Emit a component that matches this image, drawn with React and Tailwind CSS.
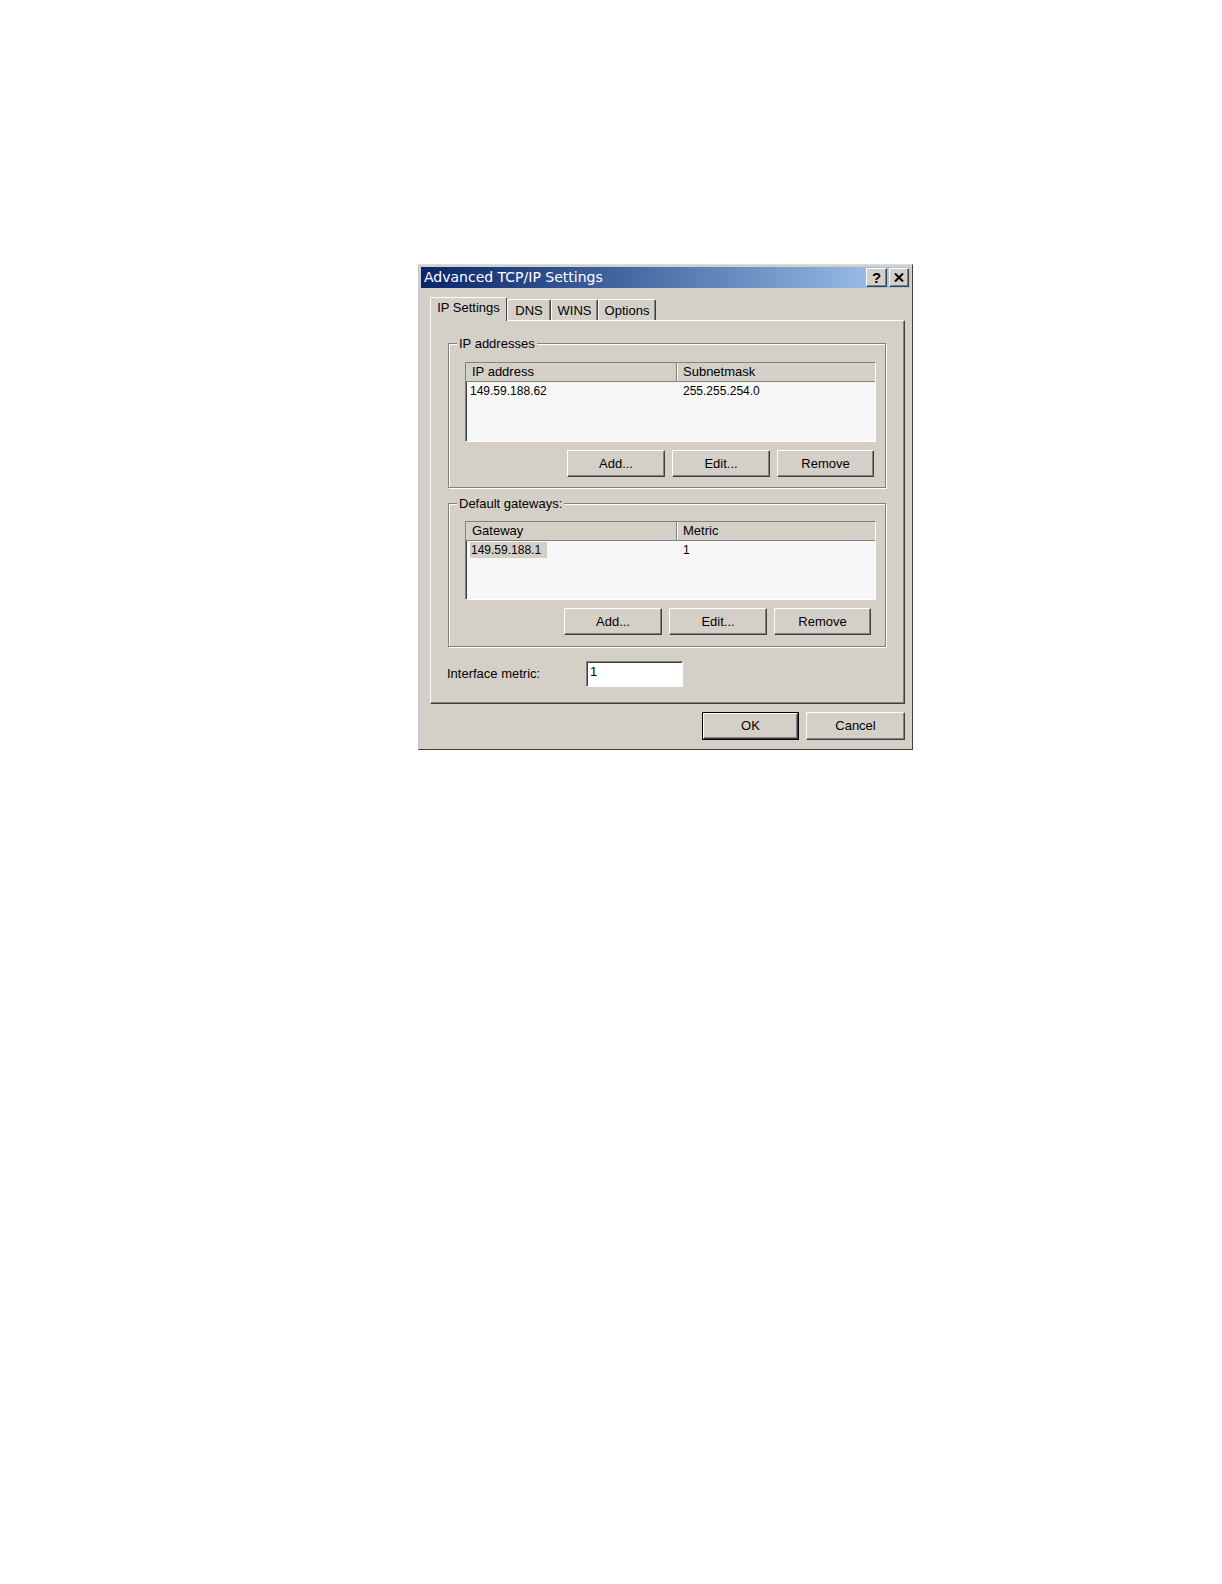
const raised =
  'border border-t-white border-l-white border-r-[#404040] border-b-[#404040] shadow-[inset_-1px_-1px_0_#808080]'
const sunken =
  'border border-t-[#808080] border-l-[#808080] border-r-white border-b-white shadow-[inset_1px_1px_0_#404040]'

function Button({ children, className = '', isDefault = false }) {
  if (isDefault) {
    return (
      <div className={`border border-black ${className}`}>
        <div className={`${raised} w-full h-full flex items-center justify-center text-[13px] text-black`}>
          {children}
        </div>
      </div>
    )
  }
  return (
    <div className={`${raised} flex items-center justify-center text-[13px] text-black ${className}`}>
      {children}
    </div>
  )
}

function Tab({ label, active, width }) {
  if (active) {
    return (
      <div
        className={`${width} h-[24px] -mb-[1px] relative z-10 bg-[#d4d0c8] border-t border-l border-t-white border-l-white border-r border-r-[#404040] rounded-t-[2px] flex items-center justify-center text-[13px] pb-[3px]`}
      >
        {label}
      </div>
    )
  }
  return (
    <div
      className={`${width} h-[21px] border-t border-l border-t-white border-l-white border-r border-r-[#404040] shadow-[inset_-1px_0_0_#808080] rounded-t-[2px] flex items-center justify-center text-[13px] pt-[1px]`}
    >
      {label}
    </div>
  )
}

function ListView({ cols, row, height, highlight }) {
  return (
    <div className={`${sunken} w-[411px] ${height} bg-[#f7f7f7] flex flex-col`}>
      <div className="h-[19px] flex bg-[#d4d0c8] border-b border-b-[#808080] text-[13px] leading-[18px]">
        <div className="w-[211px] pl-[6px] border-r border-r-[#808080] shadow-[1px_0_0_white]">{cols[0]}</div>
        <div className="flex-1 pl-[6px]">{cols[1]}</div>
      </div>
      <div className="flex text-[12px] leading-[16px] mt-[1px]">
        <div className="w-[211px] pl-[4px]">
          <span className={highlight ? 'bg-[#d4d0c8] pl-[1px] pr-[6px] py-[1px]' : ''}>{row[0]}</span>
        </div>
        <div className="flex-1 pl-[6px]">{row[1]}</div>
      </div>
    </div>
  )
}

function Group({ label, height, listHeight, listTop, cols, row, highlight, btnPad }) {
  return (
    <div className={`w-[438px] ${height} border border-[#808080] shadow-[1px_1px_0_white,inset_1px_1px_0_white] flex flex-col`}>
      <div className="-mt-[8px] ml-[8px] px-[2px] w-fit bg-[#d4d0c8] text-[13px] leading-[15px]">{label}</div>
      <div className={`ml-[16px] ${listTop}`}>
        <ListView cols={cols} row={row} height={listHeight} highlight={highlight} />
      </div>
      <div className={`flex justify-end gap-[7px] mt-[8px] ${btnPad}`}>
        <Button className="w-[98px] h-[27px]">Add...</Button>
        <Button className="w-[98px] h-[27px]">Edit...</Button>
        <Button className="w-[97px] h-[27px]">Remove</Button>
      </div>
    </div>
  )
}

export default function App() {
  return (
    <div className="w-[1222px] h-[1584px] overflow-hidden bg-white pt-[264px] pl-[418px] font-['Liberation_Sans',Arial,sans-serif] text-black">
      <div className="w-[495px] h-[486px] bg-[#d4d0c8] border border-t-[#dcdcdc] border-l-[#c8c8c8] border-r-[#404040] border-b-[#404040] p-[2px] flex flex-col">
        {/* Title bar */}
        <div className="h-[21px] bg-gradient-to-r from-[#0a246a] to-[#a6caf0] flex items-center justify-between pl-[3px] pr-[1px]">
          <span className="text-white text-[14px] font-['DejaVu_Sans',Verdana,sans-serif]">
            Advanced TCP/IP Settings
          </span>
          <div className="flex gap-[2px]">
            <div className={`${raised} bg-[#d4d0c8] w-[21px] h-[19px] flex items-center justify-center text-[15px] font-bold leading-none`}>?</div>
            <div className={`${raised} bg-[#d4d0c8] w-[20px] h-[19px] flex items-center justify-center`}>
              <svg width="10" height="9" viewBox="0 0 10 9">
                <path d="M1 0.5 L9 8.5 M9 0.5 L1 8.5" stroke="black" strokeWidth="2" />
              </svg>
            </div>
          </div>
        </div>

        {/* Body */}
        <div className="ml-[9px] mr-[5px] mt-[8px]">
          <div className="flex items-end h-[24px]">
            <Tab label="IP Settings" active width="w-[77px]" />
            <Tab label="DNS" width="w-[44px]" />
            <Tab label="WINS" width="w-[47px]" />
            <Tab label="Options" width="w-[58px]" />
          </div>
          <div className={`${raised} h-[384px] flex flex-col pl-[17px]`}>
            <div className="mt-[22px]">
              <Group
                label="IP addresses"
                height="h-[145px]"
                listHeight="h-[80px]"
                listTop="mt-[11px]"
                cols={['IP address', 'Subnetmask']}
                row={['149.59.188.62', '255.255.254.0']}
                btnPad="pr-[11px]"
              />
            </div>
            <div className="mt-[15px]">
              <Group
                label="Default gateways:"
                height="h-[144px]"
                listHeight="h-[79px]"
                listTop="mt-[10px]"
                cols={['Gateway', 'Metric']}
                row={['149.59.188.1', '1']}
                highlight
                btnPad="pr-[14px]"
              />
            </div>
            <div className="flex items-center mt-[14px] -ml-[1px]">
              <div className="w-[139px] text-[13px]">Interface metric:</div>
              <div className={`${sunken} w-[97px] h-[26px] bg-white text-[13px] leading-[18px] pl-[3px] pt-[1px]`}>1</div>
            </div>
          </div>
          <div className="flex justify-end gap-[7px] mt-[8px]">
            <Button isDefault className="w-[97px] h-[28px]">OK</Button>
            <Button className="w-[99px] h-[28px]">Cancel</Button>
          </div>
        </div>
      </div>
    </div>
  )
}
